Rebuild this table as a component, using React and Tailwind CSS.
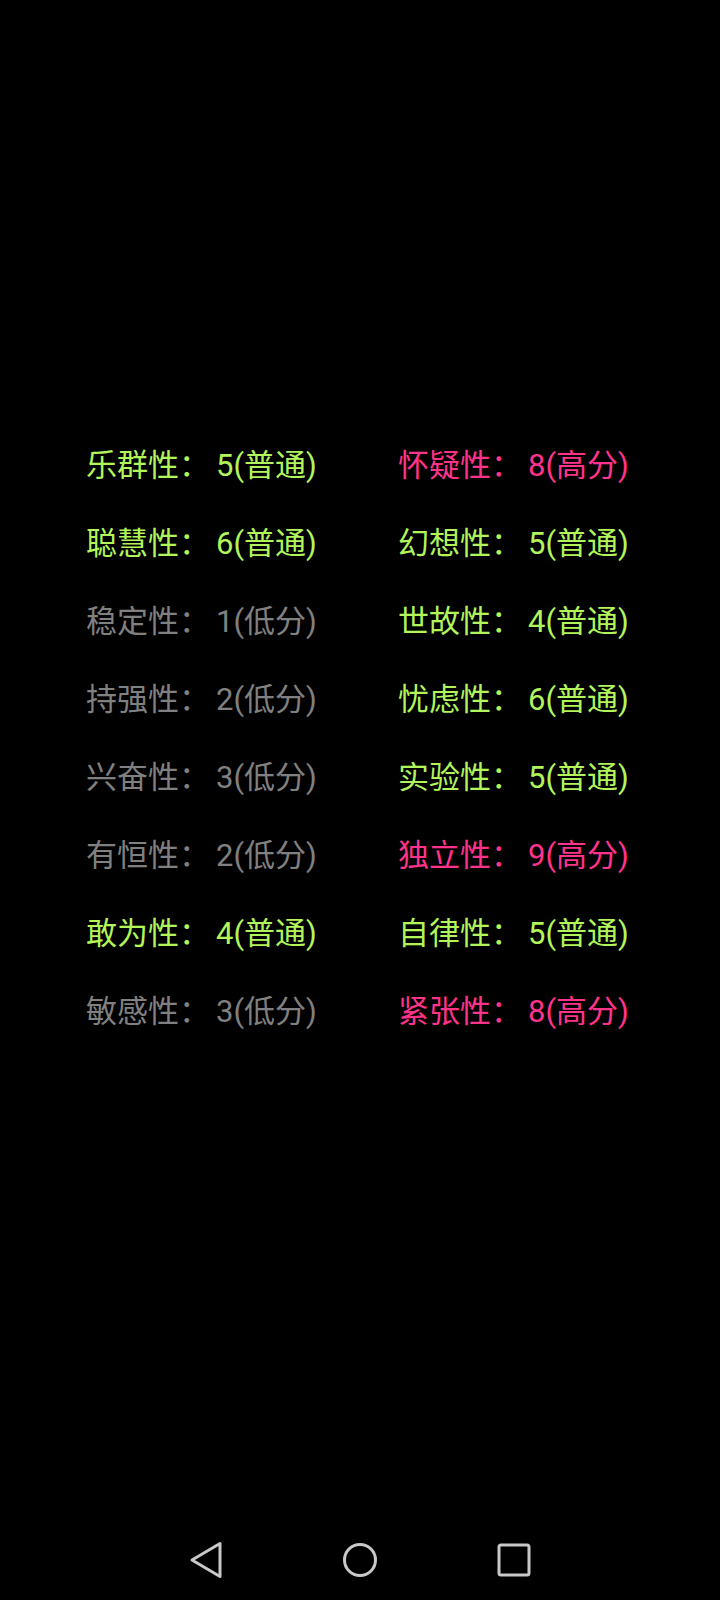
const LEFT = [
  ['乐群性', 5, '普通'],
  ['聪慧性', 6, '普通'],
  ['稳定性', 1, '低分'],
  ['持强性', 2, '低分'],
  ['兴奋性', 3, '低分'],
  ['有恒性', 2, '低分'],
  ['敢为性', 4, '普通'],
  ['敏感性', 3, '低分'],
]

const RIGHT = [
  ['怀疑性', 8, '高分'],
  ['幻想性', 5, '普通'],
  ['世故性', 4, '普通'],
  ['忧虑性', 6, '普通'],
  ['实验性', 5, '普通'],
  ['独立性', 9, '高分'],
  ['自律性', 5, '普通'],
  ['紧张性', 8, '高分'],
]

const levelColor = {
  高分: 'text-[#ff3389]',
  普通: 'text-[#b2f55a]',
  低分: 'text-[#808080]',
}

function Factor({ item }) {
  const [name, score, level] = item
  return (
    <div className={`h-[78px] flex items-center whitespace-nowrap ${levelColor[level]}`}>
      {name}
      <span className="inline-block w-[37px]">：</span>
      {score}({level})
    </div>
  )
}

export default function App() {
  return (
    <div className="w-[720px] h-[1600px] bg-black flex flex-col font-['Roboto','Noto_Sans_CJK_SC',sans-serif]">
      <div className="flex-1 pt-[426px] pl-[86px] text-[31px] leading-none">
        <div className="grid grid-cols-[312px_auto]">
          {LEFT.map((item, i) => (
            <div key={i} className="contents">
              <Factor item={item} />
              <Factor item={RIGHT[i]} />
            </div>
          ))}
        </div>
      </div>
      <div className="h-[80px] flex items-center justify-center gap-[106px]">
        <svg width="48" height="48" viewBox="0 0 48 48" fill="none" stroke="#c8c8c8" strokeWidth="3" strokeLinejoin="round">
          <path d="M38 7.5 L38 40.5 L10 24 Z" />
        </svg>
        <svg width="48" height="48" viewBox="0 0 48 48" fill="none" stroke="#c8c8c8" strokeWidth="3">
          <circle cx="24" cy="24" r="15.5" />
        </svg>
        <svg width="48" height="48" viewBox="0 0 48 48" fill="none" stroke="#c8c8c8" strokeWidth="3" strokeLinejoin="round">
          <rect x="9" y="9" width="30" height="30" rx="2" />
        </svg>
      </div>
    </div>
  )
}
